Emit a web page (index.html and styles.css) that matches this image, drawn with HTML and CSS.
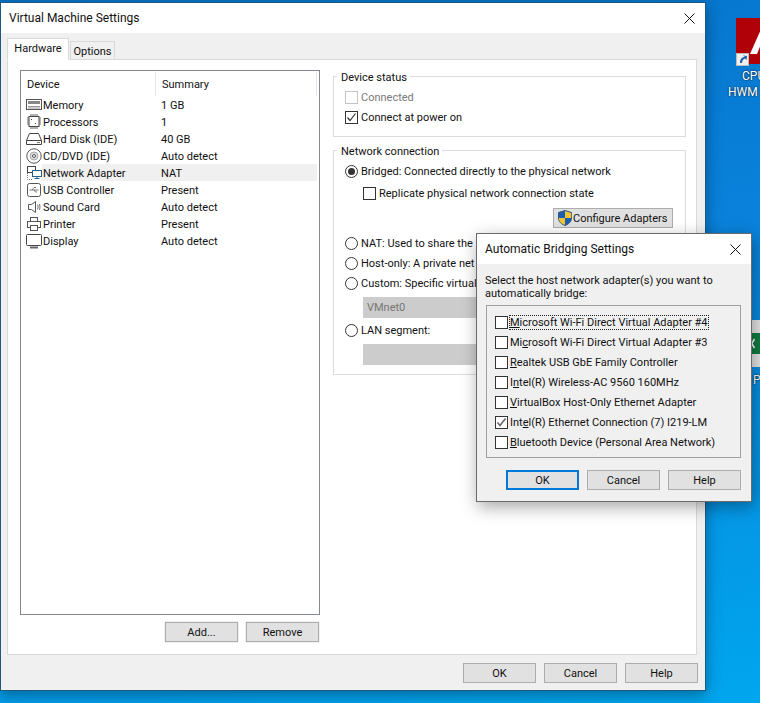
FILE: index.html
```html
<!DOCTYPE html>
<html lang="en">
<head>
<meta charset="utf-8">
<title>Virtual Machine Settings</title>
<link rel="stylesheet" href="styles.css">
</head>
<body>
<div class="desk-icon desk-icon-cpu">
  <svg class="desk-glyph" width="24" height="48" viewBox="0 0 24 48">
    <rect width="24" height="46" fill="#b00008"/>
    <path d="M14 36 L26 9 L38 36 L31 36 L26 24 L21 36Z" fill="#fff"/>
    <rect x=".5" y="35.500" width="12" height="12" fill="#f0f0f0" stroke="#bbb"/>
    <path d="M4 45 C4 41 6 39 9 39 L7 37.500 L11 38 L10.500 42 L9 40.500 C7 41 6 43 6 45Z" fill="#1c5fa8"/>
  </svg>
  <span class="desk-label desk-label-top">CPU</span>
  <span class="desk-label">HWM</span>
</div>
<div class="desk-icon desk-icon-xl">
  <span class="xl-tile"><span class="xl-mark"><svg width="9" height="21" viewBox="0 0 9 21"><path d="M-2 6 3.500 15M3.500 6-2 15" stroke="#fff" stroke-width="1.600" fill="none"/></svg></span></span>
  <span class="desk-label-p">P</span>
</div>

<main class="window">
  <header class="titlebar">
    <span>Virtual Machine Settings</span>
    <svg class="close" width="11" height="11" viewBox="0 0 11 11"><path d="M.5.500 10.500 10.500M10.500.500.500 10.500" stroke="#111" fill="none"/></svg>
  </header>
  <nav class="tabs">
    <span class="tab tab-active">Hardware</span>
    <span class="tab">Options</span>
  </nav>
  <section class="panel">
    <div class="left">
      <div class="list">
        <div class="list-head">
          <span class="col-device">Device</span>
          <span class="col-summary">Summary</span>
        </div>
        <div class="row">
          <svg class="ico" viewBox="0 0 16 16"><rect x=".5" y="2.500" width="15" height="10" fill="#fff" stroke="#555"/><rect x="2" y="4" width="12" height="3" fill="#888"/><path d="M2 9.500h12M2 11h12" stroke="#999"/></svg>
          <span class="name">Memory</span><span class="val">1 GB</span>
        </div>
        <div class="row">
          <svg class="ico" viewBox="0 0 16 16"><rect x="3" y="2.500" width="10" height="10" fill="#fff" stroke="#444"/><path d="M1 4h2M1 6h2M1 8h2M1 10h2M13 4h2M13 6h2M13 8h2M13 10h2M5 0v2M7 0v2M9 0v2M11 0v2M5 13v2M7 13v2M9 13v2M11 13v2" stroke="#666"/><rect x="5" y="5" width="1" height="1" fill="#444"/><rect x="9" y="9" width="1" height="1" fill="#444"/></svg>
          <span class="name">Processors</span><span class="val">1</span>
        </div>
        <div class="row">
          <svg class="ico" viewBox="0 0 16 16"><path d="M.5 9.500 3.500 2.500H12.500L15.500 9.500V13.500H.5Z" fill="#fff" stroke="#444"/><path d="M.5 9.500H15.500" stroke="#444"/><path d="M11 11.500h3" stroke="#777"/></svg>
          <span class="name">Hard Disk (IDE)</span><span class="val">40 GB</span>
        </div>
        <div class="row">
          <svg class="ico" viewBox="0 0 16 16"><circle cx="8" cy="8" r="7.200" fill="#fff" stroke="#555"/><circle cx="8" cy="8" r="4" fill="#ddd" stroke="#aaa"/><circle cx="8" cy="8" r="1.500" fill="#fff" stroke="#555"/></svg>
          <span class="name">CD/DVD (IDE)</span><span class="val">Auto detect</span>
        </div>
        <div class="row row-selected">
          <svg class="ico" viewBox="0 0 16 16"><rect x="1.500" y="1.500" width="8" height="6" fill="#fff" stroke="#445"/><rect x="6.500" y="5.500" width="9" height="6" fill="#fff" stroke="#26608f"/><path d="M11 11.500v2M8.500 13.500h5" stroke="#26608f"/><path d="M1.500 8v6.500H7" stroke="#777" stroke-dasharray="1 1" fill="none"/></svg>
          <span class="name">Network Adapter</span><span class="val">NAT</span>
        </div>
        <div class="row">
          <svg class="ico" viewBox="0 0 16 16"><rect x="1.500" y="1.500" width="13" height="13" rx="2" fill="#fff" stroke="#555"/><path d="M3.500 8h9M6 8l2-2.500h2M8 8l1.500 2H11" stroke="#777" fill="none"/></svg>
          <span class="name">USB Controller</span><span class="val">Present</span>
        </div>
        <div class="row">
          <svg class="ico" viewBox="0 0 16 16"><path d="M2.500 5.500H5.500L9.500 2.500V13.500L5.500 10.500H2.500Z" fill="#fff" stroke="#555"/><path d="M11.500 5.500Q13 8 11.500 10.500M13.500 5Q14.500 8 13.500 11" stroke="#777" fill="none"/></svg>
          <span class="name">Sound Card</span><span class="val">Auto detect</span>
        </div>
        <div class="row">
          <svg class="ico" viewBox="0 0 16 16"><rect x="4.500" y="1.500" width="7" height="4" fill="#fff" stroke="#555"/><rect x="1.500" y="5.500" width="13" height="6" fill="#fff" stroke="#555"/><rect x="4.500" y="9.500" width="7" height="5" fill="#fff" stroke="#555"/></svg>
          <span class="name">Printer</span><span class="val">Present</span>
        </div>
        <div class="row">
          <svg class="ico" viewBox="0 0 16 16"><rect x=".5" y="1.500" width="15" height="11" rx="1" fill="#fff" stroke="#444"/><path d="M4 14.500h8" stroke="#666" stroke-width="2"/></svg>
          <span class="name">Display</span><span class="val">Auto detect</span>
        </div>
      </div>
      <div class="list-actions">
        <span class="btn btn-ringed">Add...</span>
        <span class="btn btn-ringed">Remove</span>
      </div>
    </div>
    <div class="right">
      <fieldset class="group group-status">
        <legend>Device status</legend>
        <div class="opt opt-disabled"><span class="check"></span>Connected</div>
        <div class="opt"><span class="check"><svg viewBox="0 0 11 11" class="tick"><path d="M1.500 5.500 4 8.500 9.500 1.500" fill="none" stroke="#333" stroke-width="1.200"/></svg></span>Connect at power on</div>
      </fieldset>
      <fieldset class="group group-net">
        <legend>Network connection</legend>
        <div class="opt"><span class="radio radio-on"></span>Bridged: Connected directly to the physical network</div>
        <div class="opt opt-sub"><span class="check"></span>Replicate physical network connection state</div>
        <div class="configure-wrap">
          <span class="btn btn-configure">
            <svg class="shield" width="14" height="16" viewBox="0 0 14 16">
              <path d="M7 .500 13.500 2.500V8C13.500 12 10 14.500 7 15.500 4 14.500 .5 12 .5 8V2.500Z" fill="#1b5fb4" stroke="#35537c"/>
              <path d="M7 1V8H13.200V3Z" fill="#f4c430"/>
              <path d="M7 8V15C4 14 1 12 .8 8Z" fill="#f4c430"/>
            </svg>Configure Adapters</span>
        </div>
        <div class="opt opt-nat"><span class="radio"></span>NAT: Used to share the</div>
        <div class="opt"><span class="radio"></span>Host-only: A private net</div>
        <div class="opt"><span class="radio"></span>Custom: Specific virtual</div>
        <div class="fake-select">VMnet0</div>
        <div class="opt opt-lan"><span class="radio"></span>LAN segment:</div>
        <div class="fake-select fake-select-lan"></div>
      </fieldset>
    </div>
  </section>
  <footer class="footer">
    <span class="btn">OK</span>
    <span class="btn">Cancel</span>
    <span class="btn">Help</span>
  </footer>
</main>

<aside class="dialog">
  <header class="dialog-title">
    <span>Automatic Bridging Settings</span>
    <svg width="11" height="11" viewBox="0 0 11 11"><path d="M.5.500 10.500 10.500M10.500.500.500 10.500" stroke="#111" fill="none"/></svg>
  </header>
  <div class="dialog-body">
    <p class="dialog-msg">Select the host network adapter(s) you want to automatically bridge:</p>
    <div class="adapters">
      <div class="adapter"><span class="check"></span><span class="focused"><u>M</u>icrosoft Wi-Fi Direct Virtual Adapter #4</span></div>
      <div class="adapter"><span class="check"></span><span>Mi<u>c</u>rosoft Wi-Fi Direct Virtual Adapter #3</span></div>
      <div class="adapter"><span class="check"></span><span><u>R</u>ealtek USB GbE Family Controller</span></div>
      <div class="adapter"><span class="check"></span><span>I<u>n</u>tel(R) Wireless-AC 9560 160MHz</span></div>
      <div class="adapter"><span class="check"></span><span><u>V</u>irtualBox Host-Only Ethernet Adapter</span></div>
      <div class="adapter"><span class="check"><svg viewBox="0 0 11 11" class="tick"><path d="M1.500 5.500 4 8.500 9.500 1.500" fill="none" stroke="#666" stroke-width="1.600"/></svg></span><span>Int<u>e</u>l(R) Ethernet Connection (7) I219-LM</span></div>
      <div class="adapter"><span class="check"></span><span><u>B</u>luetooth Device (Personal Area Network)</span></div>
    </div>
    <div class="dialog-actions">
      <span class="btn btn-default">OK</span>
      <span class="btn">Cancel</span>
      <span class="btn">Help</span>
    </div>
  </div>
</aside>
</body>
</html>
```
FILE: styles.css
```css
* { box-sizing: border-box; }
html, body { margin: 0; height: 100%; overflow: hidden; }
body {
  width: 760px;
  height: 703px;
  position: relative;
  font: 11px/13px Roboto, "Liberation Sans", sans-serif;
  color: #111;
  background: linear-gradient(170deg, #0572c8 0%, #0a83dc 45%, #00a6ee 100%);
}

/* desktop */
.desk-icon { position: absolute; }
.desk-icon-cpu { left: 728px; top: 18px; width: 32px; color: #fff; }
.desk-glyph { display: block; margin-left: 8px; }
.desk-label { display: block; font-size: 12px; line-height: 16px; text-shadow: 0 0 2px #000; }
.desk-label-top { margin-top: 2px; padding-left: 14px; }
.desk-icon-xl { left: 751px; top: 320px; width: 9px; overflow: hidden; }
.xl-tile { display: flex; align-items: center; height: 47px; background: #e6e6e6; }
.xl-mark { display: block; width: 100%; height: 21px; background: #107c41; }
.xl-mark svg { display: block; }
.desk-label-p { display: block; margin-top: 7px; padding-left: 2px; color: #fff; font-size: 12px; text-shadow: 0 0 2px #000; }

/* main window */
.window {
  position: absolute;
  left: 0; top: 2px;
  width: 706px; height: 689px;
  display: flex;
  flex-direction: column;
  background: #f0f0f0;
  border: 1px solid #1b5a80;
  box-shadow: 0 4px 14px rgba(0,0,0,.35);
}
.titlebar {
  height: 30px;
  flex: none;
  background: #fff;
  padding: 0 10px 0 8px;
  display: flex;
  align-items: center;
  justify-content: space-between;
  font-size: 12px;
}
.tabs { display: flex; align-items: flex-end; height: 27px; flex: none; padding-left: 6px; position: relative; z-index: 1; margin-bottom: -1px; }
.tab {
  height: 19px;
  width: 45px;
  text-align: center;
  border: 1px solid #d9d9d9;
  line-height: 19px;
  margin-left: 1px;
  background: #f0f0f0;
}
.tab-active { height: 22px; width: 62px; background: #fff; border-bottom-color: #fff; margin-left: 0; line-height: 20px; }
.panel {
  margin-left: 6px;
  width: 690px;
  height: 596px;
  flex: none;
  background: #fff;
  border: 1px solid #d9d9d9;
  display: grid;
  grid-template-columns: 300px 353px;
  column-gap: 13px;
  padding-left: 12px;
}
.left { padding-top: 10px; }
.list { height: 545px; border: 1px solid #828790; padding: 1px 2px 0 0; }
.list-head { display: flex; height: 24px; align-items: center; }
.col-device { width: 135px; padding-left: 6px; height: 24px; line-height: 26px; border-right: 1px solid #e5e5e5; }
.col-summary { flex: 1; padding-left: 6px; height: 24px; line-height: 26px; border-right: 1px solid #e5e5e5; }
.row { display: flex; height: 17px; align-items: center; }
.ico { width: 16px; height: 16px; flex: none; margin-left: 5px; }
.name { width: 119px; flex: none; padding-left: 1px; height: 17px; line-height: 19px; }
.val { flex: 1; height: 17px; line-height: 19px; }
.row-selected .name, .row-selected .val { background: #f0f0f0; }
.list-actions { display: flex; justify-content: flex-end; gap: 8px; margin-top: 7px; padding-right: 1px; }

.btn {
  display: inline-flex;
  align-items: center;
  justify-content: center;
  width: 73px;
  height: 20px;
  background: #e1e1e1;
  border: 1px solid #adadad;
  color: #111;
  flex: none;
}
.btn-ringed { box-shadow: 0 0 0 1px #f0f0f0; }

.right { padding-top: 8px; }
.group { margin: 0; padding: 0 0 0 11px; border: 1px solid #dcdcdc; min-width: 0; }
.group legend { margin-left: -8px; padding: 0 3px 0 4px; height: 16px; line-height: 20px; }
.group-status { height: 69px; padding-top: 3px; }
.group-net { margin-top: 5px; height: 233px; padding-top: 3px; }
.opt { display: flex; align-items: center; height: 20px; }
.opt-disabled { color: #7a7a7a; }
.opt-disabled .check { border-color: #c4c4c4; }
.opt-sub { margin-top: 2px; padding-left: 18px; }
.opt-nat { margin-top: 5px; }
.opt-lan { margin-top: 2px; }
.check {
  width: 13px; height: 13px;
  flex: none;
  border: 1px solid #333;
  background: #fff;
  margin-right: 3px;
  display: block;
}
.tick { display: block; width: 11px; height: 11px; }
.radio {
  width: 13px; height: 13px;
  flex: none;
  border: 1px solid #333;
  border-radius: 50%;
  background: #fff;
  margin-right: 3px;
  display: flex;
  align-items: center;
  justify-content: center;
}
.radio-on::after { content: ""; width: 7px; height: 7px; border-radius: 50%; background: #333; }
.configure-wrap { display: flex; justify-content: flex-end; margin-top: 5px; padding-right: 12px; }
.btn-configure { width: 120px; height: 20px; justify-content: flex-start; padding-left: 4px; white-space: nowrap; }
.shield { margin-right: 1px; flex: none; }
.fake-select { margin: 4px 12px 0 18px; height: 21px; line-height: 21px; padding-left: 4px; background: #cccccc; color: #777; }

/* bridging dialog */
.dialog {
  position: absolute;
  left: 476px; top: 233px;
  width: 276px; height: 269px;
  display: flex;
  flex-direction: column;
  background: #f0f0f0;
  border: 1px solid #6a6a6a;
  box-shadow: 2px 5px 16px rgba(0,0,0,.35);
}
.dialog-title {
  height: 30px;
  flex: none;
  background: #fff;
  padding: 0 10px 0 8px;
  display: flex;
  align-items: center;
  justify-content: space-between;
  font-size: 12px;
}
.dialog-body { padding: 10px 10px 0 9px; }
.dialog-msg { margin: 0 0 0 -1px; max-width: 240px; }
.adapters { margin-top: 5px; height: 153px; border: 1px solid #a0a0a0; padding: 6px 0 0 8px; }
.adapter { display: flex; align-items: center; height: 20px; }
.adapter .check { margin-right: 2px; }
.focused { outline: 1px dotted #222; }
.dialog-actions { display: flex; justify-content: flex-end; gap: 8px; margin-top: 12px; }
.btn-default { border: 2px solid #0078d7; }

.footer { display: flex; justify-content: flex-end; gap: 8px; padding: 8px 7px 0 0; }
```
